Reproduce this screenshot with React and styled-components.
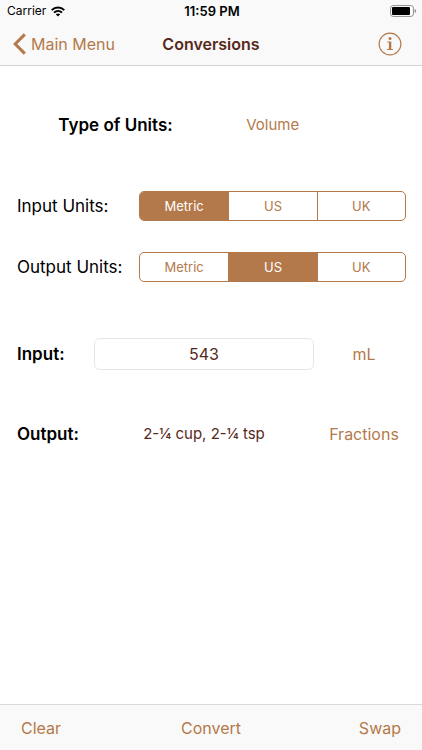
import React, { useState } from "react";
import styled, { createGlobalStyle, css } from "styled-components";

const tint = "#b4794a";
const dark = "#57291a";

const GlobalStyle = createGlobalStyle`
  * { box-sizing: border-box; }
  body {
    margin: 0;
    background: #fff;
    color: #000;
    font: 17px/24px Inter, "Liberation Sans", sans-serif;
  }
  button, input { font: inherit; margin: 0; }
`;

const Screen = styled.div`
  display: flex;
  flex-direction: column;
  min-height: 100vh;
`;

const Header = styled.header`
  background: #f9f9f9;
  border-bottom: 1px solid #d4d4d4;
`;

const StatusBar = styled.div`
  display: grid;
  grid-template-columns: 1fr auto 1fr;
  align-items: center;
  height: 22px;
  padding: 0 5px 0 7px;
  font-size: 12px;
  line-height: 22px;
`;

const Carrier = styled.div`
  display: flex;
  align-items: center;
  gap: 5px;
`;

const Clock = styled.time`
  font-size: 13px;
  font-weight: 600;
`;

const BatteryIcon = styled.svg`
  justify-self: end;
`;

const NavBar = styled.nav`
  display: grid;
  grid-template-columns: 1fr auto 1fr;
  align-items: center;
  height: 43px;
  padding: 0 20px;
`;

const Title = styled.h1`
  margin: 0;
  color: ${dark};
  font-size: 16px;
  font-weight: 600;
  line-height: 24px;
`;

const TextButton = styled.button`
  padding: 0;
  border: 0;
  background: none;
  color: ${tint};
  font-size: ${(p) => (p.$small ? 15 : 16)}px;
  cursor: pointer;
`;

const BackLink = styled.a`
  display: flex;
  align-items: center;
  gap: 4px;
  margin-left: -8px;
  color: ${tint};
  font-size: 16px;
  text-decoration: none;
`;

const InfoButton = styled(TextButton)`
  display: flex;
  justify-self: end;
`;

const Form = styled.main`
  flex: 1;
  padding: 44px 0;
`;

const row = css`
  display: grid;
  align-items: center;
  padding: 0 16px 0 17px;
`;

const TypeRow = styled.div`
  ${row}
  grid-template-columns: auto 184px;
  column-gap: 8px;
  justify-content: center;
  height: 30px;
  margin-bottom: 51px;
`;

const UnitsRow = styled.div`
  ${row}
  grid-template-columns: 122px 1fr;
  height: 30px;
  margin-bottom: ${(p) => (p.$last ? 56 : 31)}px;
`;

const ValueRow = styled.div`
  ${row}
  grid-template-columns: 77px 1fr 100px;
  min-height: 32px;
  margin-bottom: 48px;
  padding-right: 8px;
`;

const Label = styled.label`
  font-weight: ${(p) => (p.$bold ? 600 : 400)};
  white-space: nowrap;
`;

const SegmentGroup = styled.div`
  display: grid;
  grid-template-columns: repeat(3, 1fr);
  height: 30px;
  overflow: hidden;
  border: 1px solid ${tint};
  border-radius: 5px;
`;

const Segment = styled.label`
  display: flex;
  align-items: center;
  justify-content: center;
  color: ${tint};
  font-size: 13px;
  line-height: 20px;
  cursor: pointer;

  & + & { border-left: 1px solid ${tint}; }
  &:has(:checked) { background: ${tint}; color: #fff; }
  &:has(:focus-visible) { text-decoration: underline; }
`;

const Radio = styled.input`
  appearance: none;
  width: 0;
  height: 0;
  outline: 0;
`;

const ValueInput = styled.input`
  width: 100%;
  height: 32px;
  padding: 0 8px;
  border: 1px solid #e6e6e6;
  border-radius: 6px;
  background: #fff;
  color: ${dark};
  font-size: 16px;
  text-align: center;
`;

const Result = styled.output`
  color: ${dark};
  font-size: 15px;
  text-align: center;
  white-space: nowrap;
`;

const Toolbar = styled.footer`
  display: grid;
  grid-template-columns: 1fr auto 1fr;
  align-items: center;
  height: 46px;
  padding: 0 21px;
  border-top: 1px solid #d9d9d9;
  background: #f9f9f9;

  & > :first-child { justify-self: start; }
  & > :last-child { justify-self: end; }
`;

function Segments({ name, labelId, initial }) {
  const [value, setValue] = useState(initial);
  return (
    <SegmentGroup role="radiogroup" aria-labelledby={labelId}>
      {["Metric", "US", "UK"].map((unit) => (
        <Segment key={unit}>
          <Radio
            type="radio"
            name={name}
            value={unit}
            checked={value === unit}
            onChange={() => setValue(unit)}
          />
          {unit}
        </Segment>
      ))}
    </SegmentGroup>
  );
}

export default function App() {
  const [amount, setAmount] = useState("543");
  return (
    <Screen>
      <GlobalStyle />
      <Header>
        <StatusBar>
          <Carrier>
            Carrier
            <svg width="14" height="11" viewBox="0 0 14 11" fill="none" stroke="#000" strokeWidth="2" aria-hidden="true">
              <path d="M.7 4.1C4.2.7 9.8.7 13.3 4.1" />
              <path d="M3 6.6c2.300-2.200 5.700-2.200 8 0" />
              <path d="M4.800 8.300Q7 6.500 9.200 8.300L7 10.600Z" fill="#000" stroke="none" />
            </svg>
          </Carrier>
          <Clock>11:59 PM</Clock>
          <BatteryIcon width="27" height="12" viewBox="0 0 27 12" aria-hidden="true">
            <rect x=".6" y=".6" width="22.800" height="10.800" rx="2.500" fill="#fff" stroke="#8c8c8c" />
            <rect x="2" y="2" width="18" height="8" rx="1" fill="#000" />
            <path d="M24.700 4v4q1.500-.6 1.500-2t-1.500-2Z" fill="#8c8c8c" />
          </BatteryIcon>
        </StatusBar>
        <NavBar>
          <BackLink href="#menu">
            <svg width="15" height="22" viewBox="0 0 15 22" fill="none" stroke={tint} strokeWidth="3" aria-hidden="true">
              <path d="M12.800 1.400 3.200 11l9.600 9.600" />
            </svg>
            Main Menu
          </BackLink>
          <Title>Conversions</Title>
          <InfoButton type="button" aria-label="Information">
            <svg width="24" height="24" viewBox="0 0 24 24" fill={tint} aria-hidden="true">
              <circle cx="12" cy="12" r="10.900" fill="none" stroke={tint} strokeWidth="1.100" />
              <circle cx="12" cy="6.500" r="1.500" />
              <path d="M9.300 9.600h4v7.500h1.600v1H9.200v-1h1.700v-6.500H9.300Z" />
            </svg>
          </InfoButton>
        </NavBar>
      </Header>

      <Form>
        <TypeRow>
          <Label as="span" $bold id="type-label">Type of Units:</Label>
          <TextButton type="button" $small aria-describedby="type-label">Volume</TextButton>
        </TypeRow>
        <UnitsRow>
          <Label as="span" id="input-units">Input Units:</Label>
          <Segments name="input-units" labelId="input-units" initial="Metric" />
        </UnitsRow>
        <UnitsRow $last>
          <Label as="span" id="output-units">Output Units:</Label>
          <Segments name="output-units" labelId="output-units" initial="US" />
        </UnitsRow>
        <ValueRow>
          <Label $bold htmlFor="amount">Input:</Label>
          <ValueInput id="amount" inputMode="decimal" value={amount} onChange={(e) => setAmount(e.target.value)} />
          <TextButton type="button">mL</TextButton>
        </ValueRow>
        <ValueRow>
          <Label $bold htmlFor="result">Output:</Label>
          <Result id="result" htmlFor="amount">2-¼ cup, 2-¼ tsp</Result>
          <TextButton type="button">Fractions</TextButton>
        </ValueRow>
      </Form>

      <Toolbar>
        <TextButton type="button">Clear</TextButton>
        <TextButton type="button">Convert</TextButton>
        <TextButton type="button">Swap</TextButton>
      </Toolbar>
    </Screen>
  );
}
